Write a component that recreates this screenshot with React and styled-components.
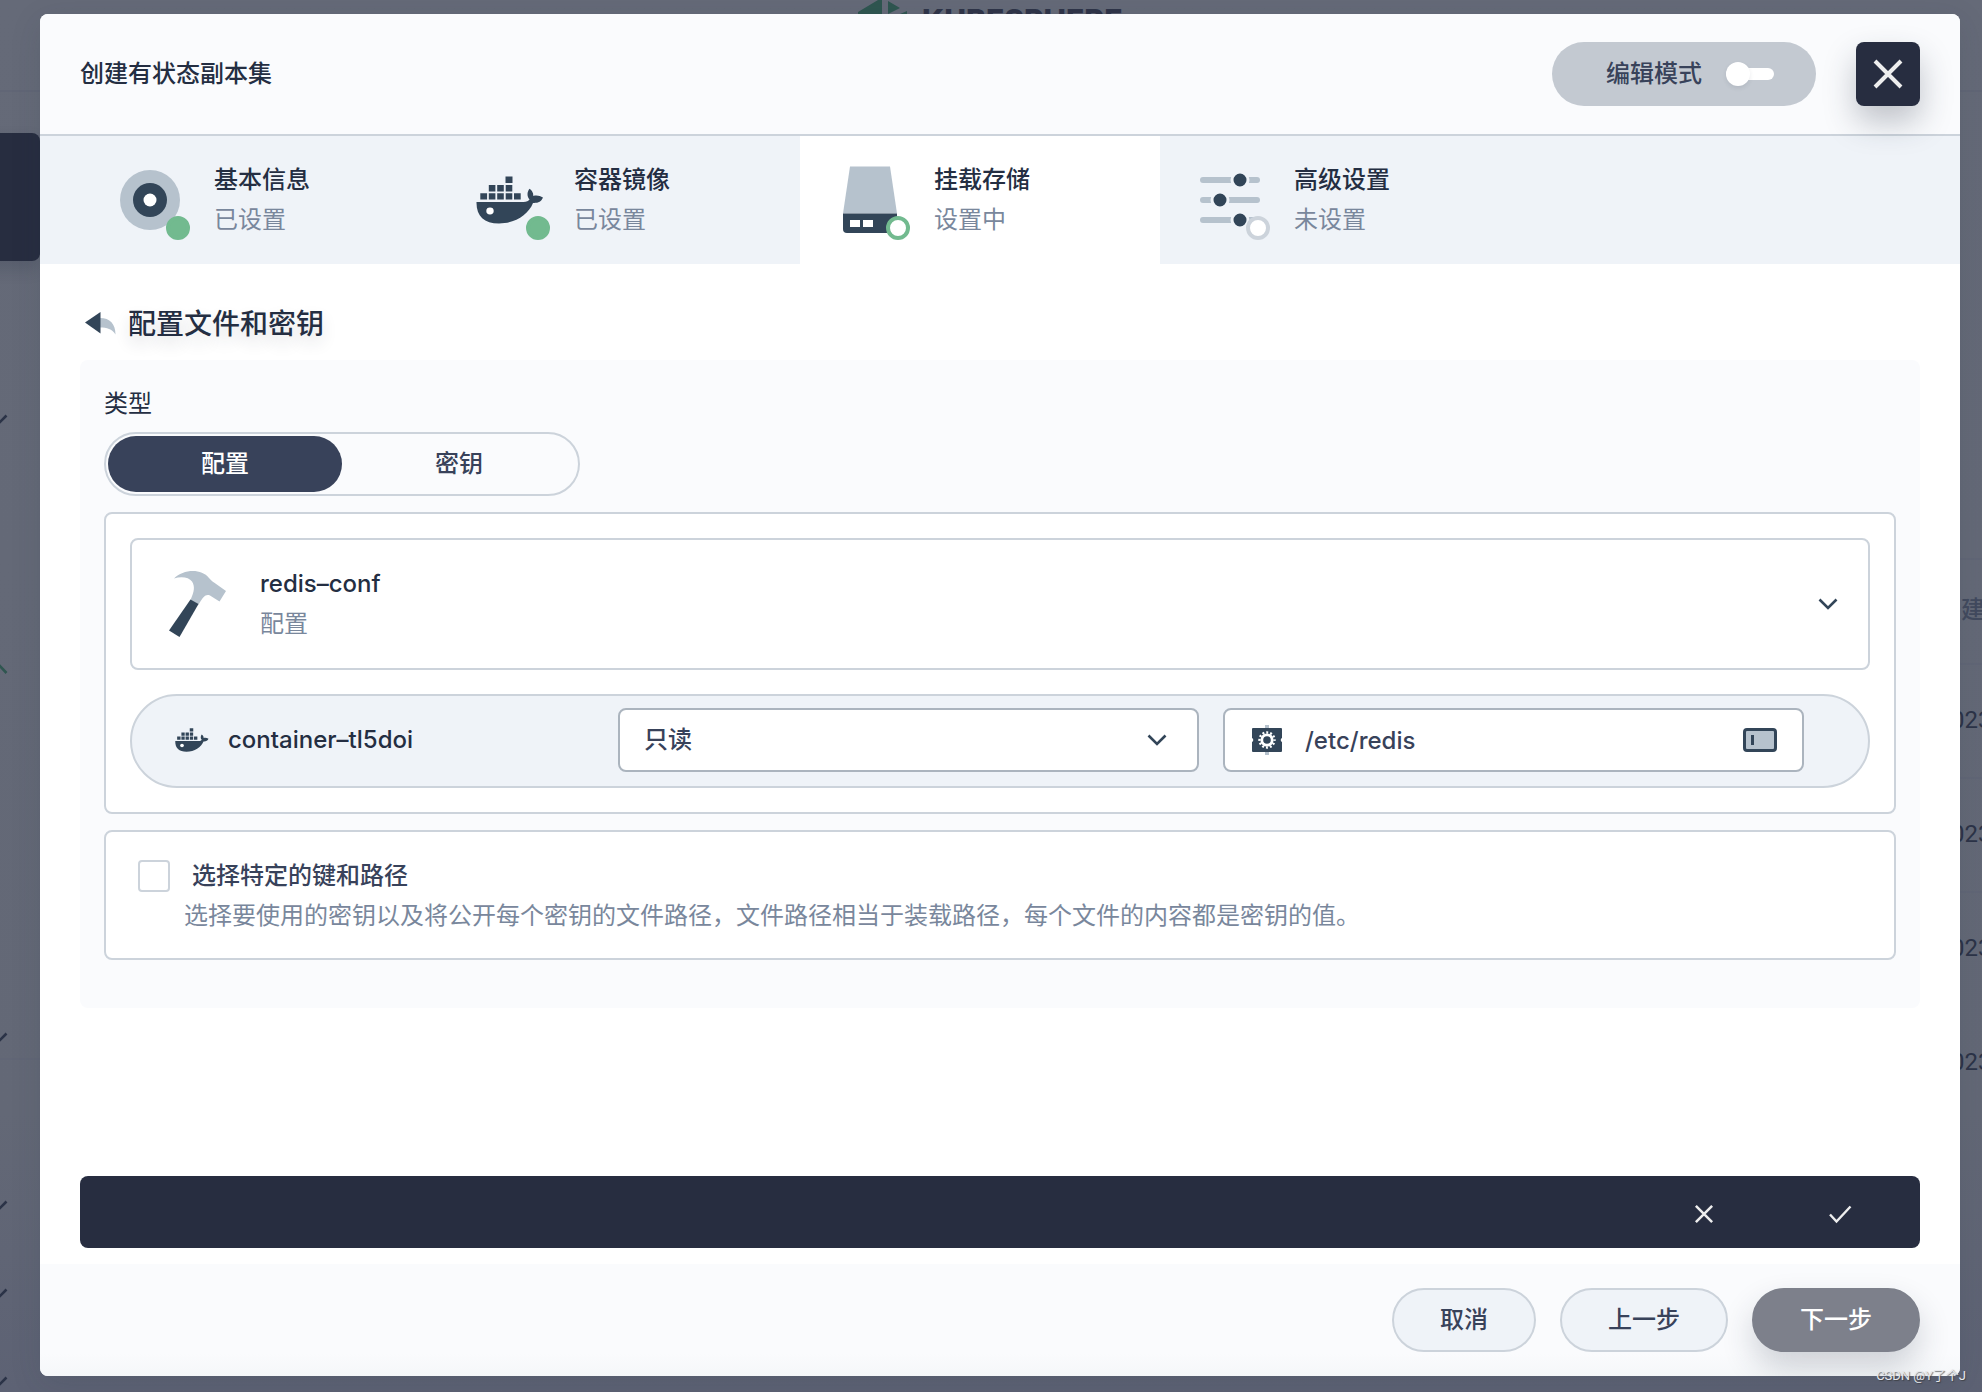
import React, { useState } from 'react';
import styled, { createGlobalStyle, css } from 'styled-components';

const c = {
  ink: '#242e42',
  text: '#38425a',
  muted: '#79879c',
  iconDark: '#324558',
  iconLight: '#b6c2cd',
  line: '#ccd3db',
  lineDark: '#abb4be',
  soft: '#eff3f8',
  softer: '#fafbfd',
  dark: '#272d40',
  green: '#72ba8f',
};

const Global = createGlobalStyle`
  * { box-sizing: border-box; }
  html, body, #root { height: 100%; }
  body {
    margin: 0;
    overflow: hidden;
    font-family: Inter, "Noto Sans CJK SC", sans-serif;
    font-size: 24px;
    line-height: 40px;
    color: ${c.ink};
    background: #646977;
  }
  button, input, select { font: inherit; color: inherit; margin: 0; }
  button { cursor: pointer; }
  svg { display: block; flex: none; }
`;

const Page = styled.div`
  position: relative;
  min-height: 100%;
  display: flex;
  padding: 14px 22px 16px 40px;
  overflow: hidden;
`;

/* dimmed console behind the dialog */
const Backdrop = styled.div`
  position: absolute;
  inset: 0;
  background: linear-gradient(#656a78, #636876 80%, #5d6274);
`;
const BackLogo = styled.svg`
  position: absolute;
  left: 856px;
  top: 0;
`;
const BackBrand = styled.div`
  position: absolute;
  left: 922px;
  top: 0;
  font-size: 30px;
  font-weight: 800;
  color: #2f3448;
`;
const BackCard = styled.div`
  position: absolute;
  left: -20px;
  top: 133px;
  width: 60px;
  height: 128px;
  border-radius: 8px;
  background: ${c.dark};
  box-shadow: 0 8px 16px rgba(36, 46, 66, 0.2);
`;
const BackMark = styled.svg`
  position: absolute;
  left: -12px;
  top: ${(p) => p.$top}px;
`;
const BackRule = styled.div`
  position: absolute;
  left: ${(p) => (p.$right ? 'auto' : 0)};
  right: ${(p) => (p.$right ? 0 : 'auto')};
  top: ${(p) => p.$top}px;
  width: 60px;
  height: 2px;
  background: #616676;
`;
const BackText = styled.div`
  position: absolute;
  left: ${(p) => p.$left}px;
  top: ${(p) => p.$top}px;
  white-space: nowrap;
  font-family: Roboto, "Noto Sans CJK SC", sans-serif;
  font-weight: ${(p) => (p.$head ? 500 : 400)};
  color: ${(p) => (p.$head ? '#424a5e' : '#2c3347')};
`;

const Dialog = styled.main`
  position: relative;
  flex: 1;
  min-width: 0;
  display: flex;
  flex-direction: column;
  border-radius: 8px;
  background: #fff;
  overflow: hidden;
  box-shadow: 0 8px 32px rgba(36, 46, 66, 0.12);
`;

const Header = styled.header`
  position: relative;
  z-index: 1;
  display: flex;
  align-items: center;
  gap: 40px;
  padding: 28px 40px;
  background: ${c.softer};
  border-bottom: 2px solid ${c.line};
`;
const Title = styled.h1`
  flex: 1;
  margin: 0;
  font-size: 24px;
  font-weight: 500;
`;
const ModeButton = styled.button`
  display: flex;
  align-items: center;
  gap: 24px;
  height: 64px;
  padding: 0 42px 0 54px;
  border: 0;
  border-radius: 32px;
  background: #c3c9d1;
  color: ${c.text};
  font-weight: 500;
`;
const SwitchMark = styled.span`
  position: relative;
  width: 48px;
  height: 12px;
  border-radius: 6px;
  background: #fff;
  &::before {
    content: '';
    position: absolute;
    left: 0;
    top: -6px;
    width: 24px;
    height: 24px;
    border-radius: 50%;
    background: #fff;
    box-shadow: 0 2px 4px rgba(36, 46, 66, 0.1);
  }
`;
const CloseButton = styled.button`
  display: grid;
  place-items: center;
  width: 64px;
  height: 64px;
  padding: 0;
  border: 0;
  border-radius: 8px;
  background: ${c.dark};
  box-shadow: 0 16px 32px rgba(36, 46, 66, 0.28);
`;

const Steps = styled.nav`
  display: flex;
  padding: 0 40px;
  background: ${c.soft};
`;
const Step = styled.button`
  display: flex;
  gap: 24px;
  width: 360px;
  height: 128px;
  padding: 24px 30px;
  border: 0;
  background: ${(p) => (p.$active ? '#fff' : 'transparent')};
  text-align: left;
`;
const StepIcon = styled.span`
  position: relative;
  width: 80px;
  height: 80px;
`;
const Dot = styled.i`
  position: absolute;
  right: 0;
  bottom: 0;
  width: 24px;
  height: 24px;
  border-radius: 50%;
  background: #fff;
  border: 4px solid ${c.line};
  ${(p) => p.$state === 'done' && css`border-color: ${c.green}; background: ${c.green};`}
  ${(p) => p.$state === 'current' && css`border-color: ${c.green};`}
`;
const TwoLines = styled.span`
  display: flex;
  flex-direction: column;
  flex: 1;
`;
const Strong = styled.span`
  font-weight: 500;
  color: ${c.ink};
`;
const Muted = styled.span`
  color: ${c.muted};
`;

const Body = styled.section`
  flex: 1;
  display: flex;
  flex-direction: column;
  padding: 40px 40px 16px;
`;
const SectionTitle = styled.div`
  display: flex;
  align-items: center;
  gap: 8px;
  margin-bottom: 16px;
`;
const BackButton = styled.button`
  padding: 0;
  border: 0;
  background: none;
`;
const SectionName = styled.h2`
  margin: 0;
  font-size: 28px;
  font-weight: 500;
  text-shadow: 0 8px 16px rgba(36, 46, 66, 0.14);
`;
const Panel = styled.div`
  display: flex;
  flex-direction: column;
  gap: 16px;
  padding: 24px 24px 48px;
  border-radius: 8px;
  background: ${c.softer};
`;
const TypeField = styled.fieldset`
  margin: 0;
  padding: 0;
  border: 0;
`;
const Legend = styled.legend`
  padding: 0;
  margin-bottom: 8px;
`;
const Segments = styled.div`
  display: inline-flex;
  vertical-align: top;
  padding: 2px;
  border: 2px solid ${c.line};
  border-radius: 32px;
`;
const Segment = styled.label`
  width: 234px;
  height: 56px;
  border-radius: 28px;
  line-height: 56px;
  text-align: center;
  font-weight: 500;
  cursor: pointer;
  color: ${(p) => (p.$on ? '#fff' : c.text)};
  background: ${(p) => (p.$on ? c.text : 'transparent')};
`;
const HiddenRadio = styled.input`
  position: absolute;
  opacity: 0;
  pointer-events: none;
`;
const Card = styled.div`
  display: flex;
  flex-direction: column;
  gap: 24px;
  padding: 24px;
  border: 2px solid ${c.line};
  border-radius: 8px;
  background: #fff;
`;
const Resource = styled.button`
  display: flex;
  align-items: center;
  gap: 24px;
  padding: 24px;
  border: 2px solid ${c.line};
  border-radius: 8px;
  background: #fff;
  text-align: left;
`;
const Mount = styled.div`
  display: grid;
  grid-template-columns: 422px minmax(0, 1fr) minmax(0, 1fr);
  gap: 24px;
  padding: 12px 64px 14px 40px;
  border: 2px solid ${c.line};
  border-radius: 47px;
  background: ${c.soft};
`;
const Container = styled.div`
  display: flex;
  align-items: center;
  gap: 16px;
  font-weight: 500;
`;
const Field = styled.div`
  display: flex;
  align-items: center;
  height: 64px;
  padding: 0 ${(p) => (p.$icons ? 22 : 24)}px;
  border: 2px solid ${c.lineDark};
  border-radius: 8px;
  background: #fff;
  color: ${c.text};
`;
const Select = styled.select`
  flex: 1;
  min-width: 0;
  height: 60px;
  padding: 0;
  border: 0;
  outline: 0;
  appearance: none;
  background: none;
  font-weight: 500;
`;
const PathInput = styled.input`
  flex: 1;
  min-width: 0;
  height: 60px;
  padding: 0 18px;
  border: 0;
  outline: 0;
  background: none;
  font-weight: 500;
`;
const KeysCard = styled.div`
  padding: 24px 32px 22px;
  border: 2px solid ${c.line};
  border-radius: 8px;
  background: #fff;
`;
const CheckLabel = styled.label`
  display: flex;
  align-items: center;
  gap: 22px;
  color: ${c.text};
  font-weight: 500;
`;
const Check = styled.input`
  appearance: none;
  width: 32px;
  height: 32px;
  border: 2px solid ${c.line};
  border-radius: 4px;
  background: #fff;
  &:checked { background: ${c.text}; }
`;
const Hint = styled.p`
  margin: 0 0 0 46px;
  color: ${c.muted};
`;
const ConfirmBar = styled.div`
  display: flex;
  justify-content: flex-end;
  margin-top: auto;
  padding: 0 12px;
  border-radius: 8px;
  background: ${c.dark};
`;
const BarButton = styled.button`
  display: grid;
  place-items: center;
  width: 136px;
  height: 72px;
  padding: 4px 0 0;
  border: 0;
  background: none;
`;
const Footer = styled.footer`
  display: flex;
  justify-content: flex-end;
  gap: 24px;
  padding: 24px 40px;
  background: linear-gradient(${c.softer} 80%, #f5f7f9);
`;
const FootButton = styled.button`
  height: 64px;
  padding: 0 46px;
  border: 2px solid ${(p) => (p.$primary ? '#7d808b' : c.line)};
  border-radius: 32px;
  background: ${(p) => (p.$primary ? '#7d808b' : c.soft)};
  color: ${(p) => (p.$primary ? '#fff' : c.text)};
  font-weight: 500;
  box-shadow: ${(p) => (p.$primary ? '0 16px 32px rgba(36, 46, 66, 0.2)' : 'none')};
`;
const Watermark = styled.div`
  position: absolute;
  right: 16px;
  bottom: 6px;
  font-family: Roboto, "Noto Sans CJK SC", sans-serif;
  font-size: 13px;
  line-height: 20px;
  color: #e6e8ec;
  text-shadow: 1px 1px 1px #333a;
`;

const BaseIcon = () => (
  <svg width="80" height="80" viewBox="0 0 80 80">
    <circle cx="40" cy="40" r="30" fill={c.iconLight} />
    <circle cx="40" cy="40" r="17" fill={c.iconDark} />
    <circle cx="40" cy="40" r="6.5" fill="#fff" />
  </svg>
);
const Whale = ({ size = 80 }) => (
  <svg width={size} height={size} viewBox="0 0 80 80" fill={c.iconDark}>
    <path d="M35.5 16.5h7v6.5h-7zM18.8 25h6.6v6.6h-6.6zM27.2 25h6.6v6.6h-6.6zM35.7 25h6.6v6.6h-6.6zM10.3 33.2h6.8v6.4h-6.8zM18.8 33.2h6.6v6.4h-6.6zM27.2 33.2h6.6v6.4h-6.6zM35.7 33.2h6.6v6.4h-6.6zM44 33.2h6.7v6.4H44z" />
    <path d="M6.5 42h47c3.2 0 4.9-.8 6-2.4-2.7-3-2.6-7.6 0-10.8 2.5 1.7 3.9 4.2 3.8 7.1 3-1 6.7-.4 9.7 1.7-1.6 4.2-5.2 5.7-10 5.4C58.5 54.5 45 63.5 29 63.5 14 63.5 6.2 56 6.5 42z" />
    <ellipse cx="20" cy="51" rx="3.7" ry="3.4" fill="#fff" />
  </svg>
);
const Disk = () => (
  <svg width="80" height="80" viewBox="0 0 80 80">
    <path d="M20 6.5h40l7 47H13z" fill={c.iconLight} />
    <path d="M13 53.5h54V69a4 4 0 0 1-4 4H17a4 4 0 0 1-4-4z" fill={c.iconDark} />
    <path d="M20 60h10v7H20zM33 60h10v7H33z" fill="#fff" />
  </svg>
);
const Sliders = () => (
  <svg width="80" height="80" viewBox="0 0 80 80">
    <path d="M13 20h54M13 40h54M13 60h54" stroke={c.iconLight} strokeWidth="6" strokeLinecap="round" />
    <g fill={c.iconDark} stroke={c.soft} strokeWidth="3">
      <circle cx="50" cy="20" r="8" />
      <circle cx="30" cy="40" r="8" />
      <circle cx="50" cy="60" r="8" />
    </g>
  </svg>
);
const Hammer = () => (
  <svg width="80" height="80" viewBox="0 0 80 80">
    <path d="M18 14.5C27 5.5 45 4 53 14c2 2.5 3.5 3.5 5 4.5L70 27l-6.5 10.5L54 31.5c-4.5-1.5-6.500 1-11.500 9L34.500 36c4-9 4.500-13.500 1.500-18.500-3-4.500-11-5.500-18-3z" fill={c.iconLight} />
    <path d="M34.5 35.5l8 4.5L23.5 73 13 66.5z" fill={c.iconDark} />
  </svg>
);
const Reply = () => (
  <svg width="40" height="40" viewBox="0 0 40 40">
    <path d="M20 14c10 0 15.5 6 15.5 16.5C32 25 27 23.5 20 23.5z" fill={c.iconLight} />
    <path d="M5 18.5L20.5 8v21.500z" fill={c.iconDark} />
  </svg>
);
const Chevron = () => (
  <svg width="32" height="32" viewBox="0 0 32 32" fill="none" stroke={c.iconDark} strokeWidth="2.6">
    <path d="M7.5 11.5L16 20l8.5-8.5" />
  </svg>
);
const Gear = () => (
  <svg width="40" height="40" viewBox="0 0 40 40">
    <path d="M18 5h4v30h-4z" fill={c.iconLight} />
    <path d="M6 8h28a1 1 0 0 1 1 1v9a2.2 2.2 0 0 0 0 4v9a1 1 0 0 1-1 1H6a1 1 0 0 1-1-1v-9a2.2 2.2 0 0 0 0-4V9a1 1 0 0 1 1-1z" fill={c.iconDark} />
    <circle cx="20" cy="20" r="7.5" fill="none" stroke="#fff" strokeWidth="2.4" strokeDasharray="1.964 1.964" strokeDashoffset="0.982" />
    <circle cx="20" cy="20" r="5.2" fill="none" stroke="#fff" strokeWidth="2.8" />
  </svg>
);
const InputMark = () => (
  <svg width="40" height="40" viewBox="0 0 40 40">
    <rect x="4.5" y="9.5" width="31" height="21" rx="2.5" fill={c.iconLight} stroke={c.iconDark} strokeWidth="3" />
    <path d="M11 15h3v10h-3z" fill={c.iconDark} />
  </svg>
);
const Cross = ({ size }) => (
  <svg width={size} height={size} viewBox="0 0 32 32" fill="none" stroke="#eee" strokeWidth="4">
    <path d="M3 3l26 26M29 3L3 29" />
  </svg>
);
const Tick = () => (
  <svg width="24" height="24" viewBox="0 0 24 24" fill="none" stroke="#eee" strokeWidth="2.4">
    <path d="M2 12.5l6.5 7L22.5 4.5" />
  </svg>
);

const steps = [
  { name: '基本信息', note: '已设置', state: 'done', icon: <BaseIcon /> },
  { name: '容器镜像', note: '已设置', state: 'done', icon: <Whale /> },
  { name: '挂载存储', note: '设置中', state: 'current', icon: <Disk /> },
  { name: '高级设置', note: '未设置', state: 'todo', icon: <Sliders /> },
];
const types = ['配置', '密钥'];

export default function App() {
  const [type, setType] = useState('配置');
  const [path, setPath] = useState('/etc/redis');

  return (
    <Page>
      <Global />
      <Backdrop aria-hidden="true">
        {[90, 1058].map((t) => <BackRule key={t} $top={t} />)}
        {[90, 558, 663, 777, 891].map((t) => <BackRule key={t} $right $top={t} />)}
        <BackLogo width="52" height="14" viewBox="0 0 52 14" fill="#2f5650">
          <path d="M2 12L22 0h4v14H2zM32 1l12 7-12 6zM44 14l7-3v3z" />
        </BackLogo>
        <BackBrand>KUBESPHERE</BackBrand>
        <BackCard />
        {[412, 1030, 1198, 1286, 1374].map((t) => (
          <BackMark key={t} $top={t} width="20" height="14" viewBox="0 0 20 14" fill="none" stroke="#2b3347" strokeWidth="2.6">
            <path d="M2 4l8 8 8.5-8.5" />
          </BackMark>
        ))}
        <BackMark $top={662} width="20" height="14" viewBox="0 0 20 14" fill="none" stroke="#2f5650" strokeWidth="2.6">
          <path d="M2 10l8-8 8.5 9" />
        </BackMark>
        <BackText $left={1961} $top={590} $head>建</BackText>
        {[700, 814, 928, 1042].map((t) => (
          <BackText key={t} $left={1951} $top={t}>023</BackText>
        ))}
      </Backdrop>

      <Dialog>
        <Header>
          <Title>创建有状态副本集</Title>
          <ModeButton type="button">编辑模式<SwitchMark /></ModeButton>
          <CloseButton type="button" aria-label="关闭"><Cross size={32} /></CloseButton>
        </Header>

        <Steps>
          {steps.map((s) => (
            <Step key={s.name} type="button" $active={s.state === 'current'}>
              <StepIcon>{s.icon}<Dot $state={s.state} /></StepIcon>
              <TwoLines><Strong>{s.name}</Strong><Muted>{s.note}</Muted></TwoLines>
            </Step>
          ))}
        </Steps>

        <Body>
          <SectionTitle>
            <BackButton type="button" aria-label="返回"><Reply /></BackButton>
            <SectionName>配置文件和密钥</SectionName>
          </SectionTitle>

          <Panel>
            <TypeField>
              <Legend>类型</Legend>
              <Segments>
                {types.map((t) => (
                  <Segment key={t} $on={t === type}>
                    <HiddenRadio type="radio" name="type" checked={t === type} onChange={() => setType(t)} />
                    {t}
                  </Segment>
                ))}
              </Segments>
            </TypeField>

            <Card>
              <Resource type="button">
                <Hammer />
                <TwoLines><Strong>redis–conf</Strong><Muted>配置</Muted></TwoLines>
                <Chevron />
              </Resource>
              <Mount>
                <Container><Whale size={40} />container–tl5doi</Container>
                <Field>
                  <Select aria-label="访问模式" defaultValue="ro">
                    <option value="ro">只读</option>
                  </Select>
                  <Chevron />
                </Field>
                <Field $icons>
                  <Gear />
                  <PathInput aria-label="挂载路径" value={path} onChange={(e) => setPath(e.target.value)} />
                  <InputMark />
                </Field>
              </Mount>
            </Card>

            <KeysCard>
              <CheckLabel><Check type="checkbox" />选择特定的键和路径</CheckLabel>
              <Hint>选择要使用的密钥以及将公开每个密钥的文件路径，文件路径相当于装载路径，每个文件的内容都是密钥的值。</Hint>
            </KeysCard>
          </Panel>

          <ConfirmBar>
            <BarButton type="button" aria-label="放弃"><Cross size={20} /></BarButton>
            <BarButton type="button" aria-label="确定"><Tick /></BarButton>
          </ConfirmBar>
        </Body>

        <Footer>
          <FootButton type="button">取消</FootButton>
          <FootButton type="button">上一步</FootButton>
          <FootButton type="button" $primary>下一步</FootButton>
        </Footer>
      </Dialog>
      <Watermark>CSDN @Y了个J</Watermark>
    </Page>
  );
}
